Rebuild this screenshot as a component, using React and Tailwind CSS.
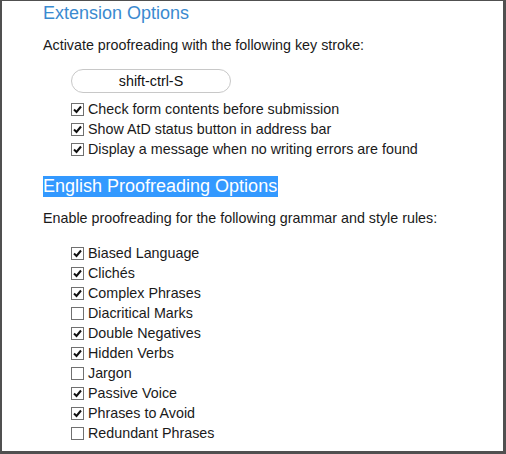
import React from "react";

function Box({ checked }) {
  return (
    <span className="inline-flex w-[13px] h-[13px] border border-[#707070] bg-white items-center justify-center shrink-0">
      {checked && (
        <svg width="9" height="9" viewBox="0 0 9 9">
          <path d="M1 4.5 L3.5 7 L8 1.5" fill="none" stroke="#111" strokeWidth="2" />
        </svg>
      )}
    </span>
  );
}

function Row({ checked, label }) {
  return (
    <div className="flex items-center h-[20px] gap-[4px]">
      <Box checked={checked} />
      <span>{label}</span>
    </div>
  );
}

export default function App() {
  const rules = [
    [true, "Biased Language"],
    [true, "Clichés"],
    [true, "Complex Phrases"],
    [false, "Diacritical Marks"],
    [true, "Double Negatives"],
    [true, "Hidden Verbs"],
    [false, "Jargon"],
    [true, "Passive Voice"],
    [true, "Phrases to Avoid"],
    [false, "Redundant Phrases"],
  ];
  return (
    <div
      className="w-[506px] h-[454px] bg-white border-t border-l-2 border-r-[3px] border-b-[3px] border-[#505050] overflow-hidden text-[#1a1a1a] text-[14.3px] leading-[20px]"
      style={{ fontFamily: '"Liberation Sans", Arial, sans-serif' }}
    >
      <div className="pl-[41px]">
        <h1 className="text-[18px] leading-[24px] text-[#3a8ad0]">Extension Options</h1>
        <p className="mt-[10px]">Activate proofreading with the following key stroke:</p>
        <div className="pl-[28px] mt-[14px]">
          <div className="w-[160px] h-[24px] rounded-full border border-[#c8c8c8] flex items-center justify-center text-[#111]">
            shift-ctrl-S
          </div>
          <div className="mt-[6px]">
            <Row checked label="Check form contents before submission" />
            <Row checked label="Show AtD status button in address bar" />
            <Row checked label="Display a message when no writing errors are found" />
          </div>
        </div>
        <h2 className="mt-[17px] text-[18px] leading-[21px] text-white bg-[#3399ff] inline-block pr-[1px]">
          English Proofreading Options
        </h2>
        <p className="mt-[11px]">Enable proofreading for the following grammar and style rules:</p>
        <div className="pl-[28px] mt-[15px]">
          {rules.map(([c, l]) => (
            <Row key={l} checked={c} label={l} />
          ))}
        </div>
      </div>
    </div>
  );
}
